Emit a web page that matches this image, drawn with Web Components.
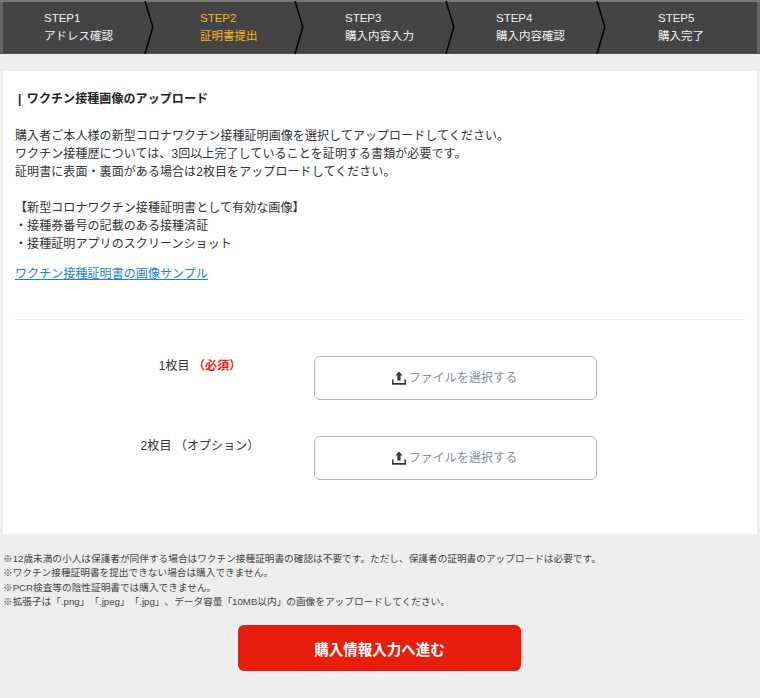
<!DOCTYPE html>
<html lang="ja">
<head>
<meta charset="utf-8">
<title>ワクチン接種画像のアップロード</title>
<style>
    html, body { margin: 0; padding: 0; background: #eeeeee; }
    body {
        font-family: 'Liberation Sans', 'Noto Sans CJK JP', sans-serif;
        color: #333;
        text-spacing-trim: space-all;
    }
</style>
</head>
<body>
<step-bar>
    <step-item num="STEP1" label="アドレス確認" pad="41" width="142"></step-item>
    <step-item num="STEP2" label="証明書提出" pad="55" width="150" active></step-item>
    <step-item num="STEP3" label="購入内容入力" pad="50" width="151"></step-item>
    <step-item num="STEP4" label="購入内容確認" pad="50" width="151"></step-item>
    <step-item num="STEP5" label="購入完了" pad="61" width="160" last></step-item>
</step-bar>

<upload-card heading="ワクチン接種画像のアップロード">
    <p>購入者ご本人様の新型コロナワクチン接種証明画像を選択してアップロードしてください。<br>
    ワクチン接種歴については、3回以上完了していることを証明する書類が必要です。<br>
    証明書に表面・裏面がある場合は2枚目をアップロードしてください。</p>
    <p>【新型コロナワクチン接種証明書として有効な画像】<br>
    ・接種券番号の記載のある接種済証<br>
    ・接種証明アプリのスクリーンショット</p>
    <a slot="link" href="#">ワクチン接種証明書の画像サンプル</a>
    <upload-row slot="rows">1枚目 <b>（必須）</b></upload-row>
    <upload-row slot="rows">2枚目 （オプション）</upload-row>
</upload-card>

<note-list>
    <div>※12歳未満の小人は保護者が同伴する場合はワクチン接種証明書の確認は不要です。ただし、保護者の証明書のアップロードは必要です。</div>
    <div>※ワクチン接種証明書を提出できない場合は購入できません。</div>
    <div>※PCR検査等の陰性証明書では購入できません。</div>
    <div>※拡張子は「.png」「.jpeg」「.jpg」、データ容量「10MB以内」の画像をアップロードしてください。</div>
</note-list>

<next-button>購入情報入力へ進む</next-button>

<script>
class StepBar extends HTMLElement {
    connectedCallback() {
        this.attachShadow({ mode: 'open' });
        this.shadowRoot.innerHTML = `
            <style>
                :host {
                    display: flex;
                    height: 51px;
                    margin-top: 2px;
                    padding: 0 3px;
                    background: #444;
                    box-shadow: inset 3px 0 0 #666, inset -3px 0 0 #666, 0 -2px 0 #777, 0 1px 0 #555;
                }
            </style>
            <slot></slot>
        `;
    }
}

class StepItem extends HTMLElement {
    connectedCallback() {
        const active = this.hasAttribute('active');
        const last = this.hasAttribute('last');
        this.attachShadow({ mode: 'open' });
        this.shadowRoot.innerHTML = `
            <style>
                :host {
                    display: block;
                    position: relative;
                    flex: none;
                    box-sizing: border-box;
                    width: ${this.getAttribute('width')}px;
                    padding-left: ${this.getAttribute('pad')}px;
                    padding-top: 8px;
                    color: ${active ? '#f4b41e' : '#f2f2f2'};
                    font-size: 11.5px;
                    line-height: 17.5px;
                }
                div { white-space: nowrap; }
                svg { position: absolute; top: -1px; right: -9px; }
            </style>
            <div>${this.getAttribute('num')}</div>
            <div>${this.getAttribute('label')}</div>
            ${last ? '' : `<svg width="10" height="53" viewBox="0 0 10 53">
                <path d="M1 0 L8.8 26 L1 53" fill="none" stroke="#000" stroke-width="1.5"/>
            </svg>`}
        `;
    }
}

class UploadCard extends HTMLElement {
    connectedCallback() {
        this.attachShadow({ mode: 'open' });
        this.shadowRoot.innerHTML = `
            <style>
                :host {
                    display: block;
                    box-sizing: border-box;
                    height: 463px;
                    margin: 18px 3px 0;
                    padding: 19px 12px 0;
                    background: #fff;
                    font-size: 12px;
                    line-height: 18px;
                    letter-spacing: 0.08px;
                    color: #333;
                }
                h2 {
                    margin: 0 0 19px;
                    padding-left: 3px;
                    font-size: 12px;
                    line-height: 18px;
                    font-weight: bold;
                    color: #222;
                }
                h2 span { margin-right: 2px; }
                ::slotted(p) { margin: 0 0 18px; }
                ::slotted(p:last-of-type) { margin-bottom: 12px; }
                ::slotted(a) { color: #1a7fe0; text-decoration: underline; }
                hr {
                    margin: 36px 0 0;
                    border: 0;
                    border-top: 1px solid #eee;
                }
                .rows {
                    display: flex;
                    flex-direction: column;
                    gap: 36px;
                    margin-top: 36px;
                    padding: 0 148px 0 65px;
                }
            </style>
            <h2><span>|</span> ${this.getAttribute('heading')}</h2>
            <slot></slot>
            <div class="link"><slot name="link"></slot></div>
            <hr>
            <div class="rows"><slot name="rows"></slot></div>
        `;
    }
}

class UploadRow extends HTMLElement {
    connectedCallback() {
        this.attachShadow({ mode: 'open' });
        this.shadowRoot.innerHTML = `
            <style>
                :host {
                    display: grid;
                    grid-template-columns: 234px 283px;
                    font-size: 12px;
                    color: #333;
                }
                .label { text-align: center; padding: 1px 0 0 6px; }
                ::slotted(b) { color: #e81e0c; }
                .picker {
                    display: flex;
                    align-items: center;
                    justify-content: center;
                    gap: 3px;
                    box-sizing: border-box;
                    height: 44px;
                    padding-right: 2px;
                    border: 1px solid #adb5bd;
                    border-radius: 6px;
                    color: #868e96;
                    background: #fff;
                }
                svg { display: block; }
            </style>
            <div class="label"><slot></slot></div>
            <div class="picker">
                <svg width="14" height="14" viewBox="0 0 14 14">
                    <path d="M7 0.5 L10.6 4.6 H8.6 V9.6 H5.4 V4.6 H3.4 Z" fill="#343a40"/>
                    <path d="M0.8 8.4 V12.9 H13.2 V8.4" fill="none" stroke="#343a40" stroke-width="1.6"/>
                </svg>
                <span>ファイルを選択する</span>
            </div>
        `;
    }
}

class NoteList extends HTMLElement {
    connectedCallback() {
        this.attachShadow({ mode: 'open' });
        this.shadowRoot.innerHTML = `
            <style>
                :host {
                    display: block;
                    margin: 18px 0 0 3px;
                    font-size: 9.67px;
                    line-height: 14.4px;
                    color: #444;
                }
            </style>
            <slot></slot>
        `;
    }
}

class NextButton extends HTMLElement {
    connectedCallback() {
        this.attachShadow({ mode: 'open' });
        this.shadowRoot.innerHTML = `
            <style>
                :host {
                    display: block;
                    margin: 15.4px 0 0 238px;
                }
                button {
                    display: block;
                    width: 283px;
                    height: 46px;
                    padding: 0;
                    border: 0;
                    border-radius: 6px;
                    background: #e81e0c;
                    color: #fff;
                    font: bold 14.5px 'Liberation Sans', 'Noto Sans CJK JP', sans-serif;
                }
            </style>
            <button type="button"><slot></slot></button>
        `;
    }
}

customElements.define('step-bar', StepBar);
customElements.define('step-item', StepItem);
customElements.define('upload-card', UploadCard);
customElements.define('upload-row', UploadRow);
customElements.define('note-list', NoteList);
customElements.define('next-button', NextButton);
</script>
</body>
</html>
